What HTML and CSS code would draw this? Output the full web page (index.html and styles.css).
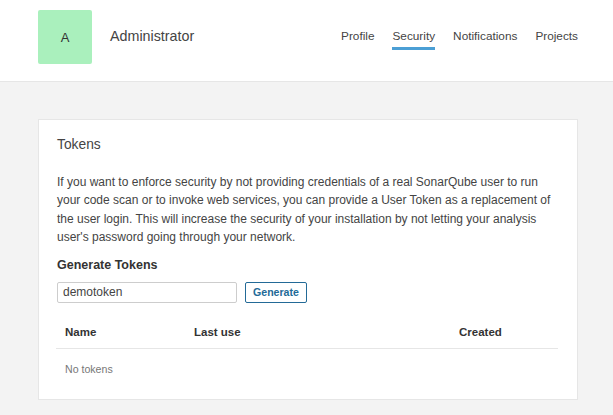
FILE: index.html
```html
<!DOCTYPE html>
<html>
<head>
<meta charset="utf-8">
<link rel="stylesheet" href="styles.css">
</head>
<body>
<header class="header">
  <div class="user">
    <div class="avatar">A</div>
    <div class="username">Administrator</div>
  </div>
  <nav class="nav">
    <a class="nav-item">Profile</a>
    <a class="nav-item active">Security</a>
    <a class="nav-item">Notifications</a>
    <a class="nav-item">Projects</a>
  </nav>
</header>
<main class="main">
  <section class="card">
    <h2 class="card-title">Tokens</h2>
    <p class="desc">If you want to enforce security by not providing credentials of a real SonarQube user to run your code scan or to invoke web services, you can provide a User Token as a replacement of the user login. This will increase the security of your installation by not letting your analysis user's password going through your network.</p>
    <h3 class="sub-title">Generate Tokens</h3>
    <form class="gen-form">
      <input class="token-input" type="text" value="demotoken">
      <button class="btn" type="button">Generate</button>
    </form>
    <table class="tokens">
      <thead>
        <tr><th class="col-name">Name</th><th class="col-last">Last use</th><th class="col-created">Created</th></tr>
      </thead>
      <tbody>
        <tr><td class="empty" colspan="3">No tokens</td></tr>
      </tbody>
    </table>
  </section>
</main>
</body>
</html>
```
FILE: styles.css
```css
html, body {
  margin: 0;
  padding: 0;
}
body {
  font-family: "Liberation Sans", Arial, sans-serif;
  color: #444;
  background: #f3f3f3;
  font-size: 12px;
}
.header {
  background: #fff;
  height: 82px;
  border-bottom: 1px solid #e6e6e6;
  box-sizing: border-box;
  display: flex;
  justify-content: space-between;
  align-items: flex-start;
  padding: 10px 35px 0 38px;
}
.user {
  display: flex;
  align-items: center;
}
.avatar {
  width: 54px;
  height: 54px;
  background: #aaf0bd;
  border-radius: 2px;
  display: flex;
  align-items: center;
  justify-content: center;
  font-size: 13px;
  color: #333;
}
.username {
  margin-left: 18px;
  font-size: 14.3px;
  color: #444;
  margin-top: -2px;
}
.nav {
  display: flex;
  gap: 18px;
  padding-top: 19px;
}
.nav-item {
  font-size: 11.8px;
  color: #444;
  padding-bottom: 3px;
  border-bottom: 3px solid transparent;
  line-height: 15px;
}
.nav-item.active {
  border-bottom-color: #4b9fd5;
}
.main {
  padding: 37px 35px 0 38px;
}
.card {
  width: 540px;
  box-sizing: border-box;
  background: #fff;
  border: 1px solid #e6e6e6;
  padding: 15px 19px 15px 18px;
}
.card-title {
  margin: 0;
  font-size: 13.8px;
  font-weight: normal;
  color: #444;
  line-height: 20px;
}
.desc {
  margin: 18px 0 0;
  line-height: 18.4px;
  color: #444;
  font-size: 12px;
}
.sub-title {
  margin: 9px 0 0;
  font-size: 12.5px;
  font-weight: bold;
  color: #333;
  line-height: 18px;
}
.gen-form {
  display: flex;
  gap: 8px;
  margin-top: 8px;
}
.token-input {
  width: 180px;
  height: 21px;
  box-sizing: border-box;
  border: 1px solid #cdcdcd;
  border-radius: 2px;
  padding: 0 5px;
  font-family: inherit;
  font-size: 12px;
  color: #444;
  margin: 0;
}
.btn {
  height: 21px;
  box-sizing: border-box;
  border: 1px solid #236a97;
  border-radius: 2px;
  background: #fff;
  color: #236a97;
  font-family: inherit;
  font-weight: bold;
  font-size: 10.6px;
  padding: 0 7px;
  margin: 0;
}
.tokens {
  width: 502px;
  border-collapse: collapse;
  margin-top: 18px;
  margin-left: -1px;
}
.tokens th {
  text-align: left;
  font-weight: bold;
  color: #333;
  font-size: 11.5px;
  padding: 4px 9px 9px;
  border-bottom: 1px solid #e6e6e6;
  line-height: 14px;
}
.col-name { width: 111px; }
.col-last { width: 247px; }
.tokens td.empty {
  color: #777;
  font-size: 10.6px;
  padding: 14px 9px 8px;
  line-height: 13px;
}
```
